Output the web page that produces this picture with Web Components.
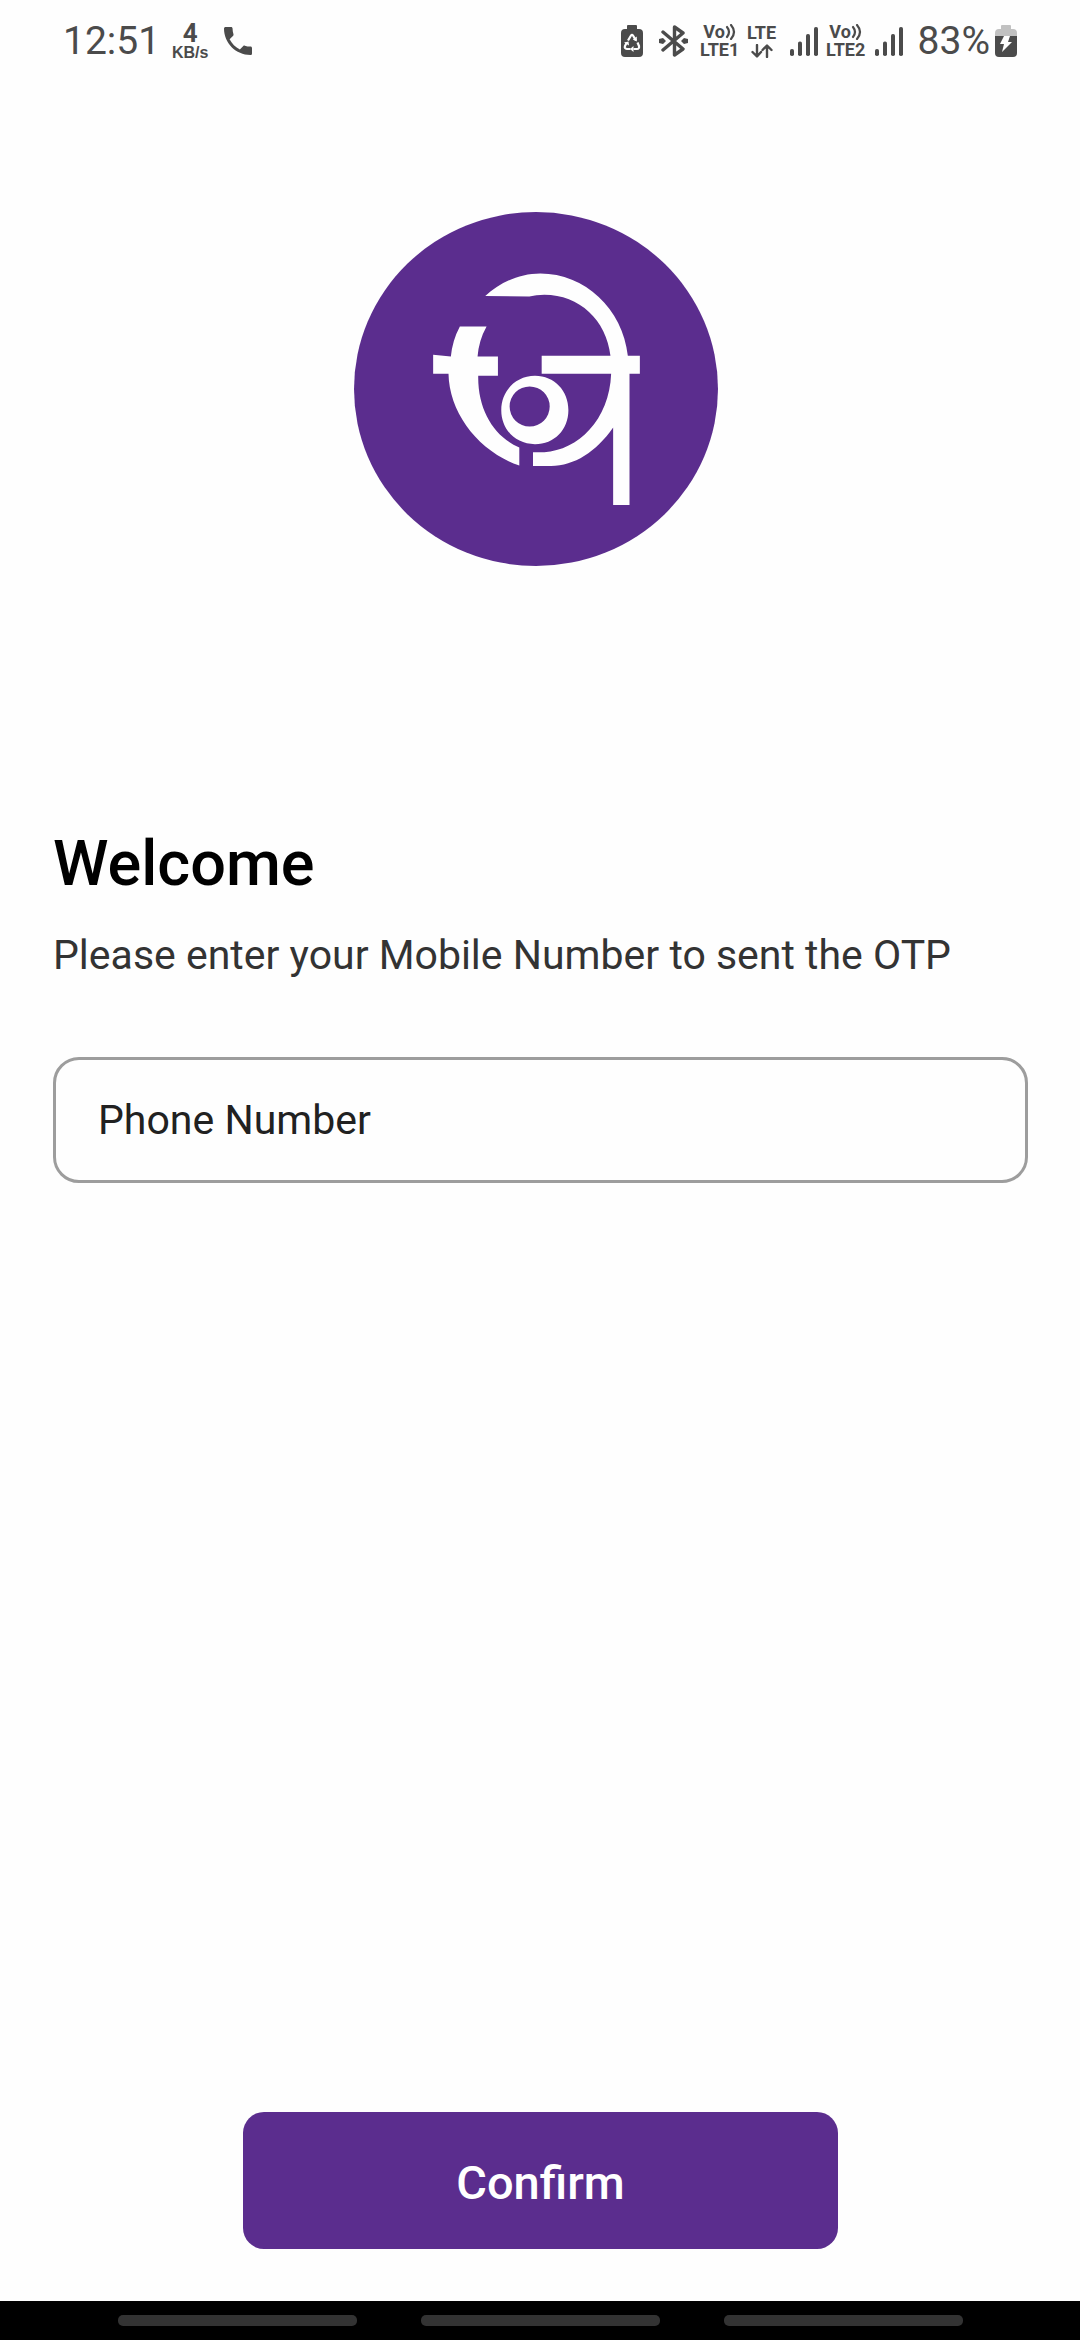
<!DOCTYPE html>
<html lang="en">
<head>
<meta charset="utf-8">
<meta name="viewport" content="width=device-width, initial-scale=1">
<title>Welcome</title>
<style>
  body { margin: 0; background: #fefefe; font-family: Roboto, "Noto Sans", sans-serif; }
</style>
</head>
<body>
<login-screen></login-screen>

<template id="status-bar">
  <style>
    :host { display: flex; align-items: center; justify-content: space-between; height: 82px; padding: 0 63px; color: #4b4b4b; box-sizing: border-box; font-size: 39px; line-height: 48px; }
    .group { display: flex; align-items: center; }
    svg { display: block; fill: currentColor; flex: none; }
  </style>
  <div class="group"><span>12:51</span><net-speed></net-speed>
    <svg width="28" height="28" viewBox="3 3 18 18" role="img" aria-label="Call"><path d="M6.6 10.8c1.4 2.8 3.8 5.1 6.6 6.6l2.2-2.2c.3-.3.7-.4 1-.2 1.1.4 2.3.6 3.6.6.6 0 1 .4 1 1V20c0 .6-.4 1-1 1C10.600 21 3 13.400 3 4c0-.6.500-1 1-1h3.500c.6 0 1 .4 1 1 0 1.200.2 2.400.6 3.600.1.300 0 .7-.2 1z"/></svg>
  </div>
  <div class="group">
    <svg width="22" height="32" viewBox="0 0 22 32"><path d="M7 0h8q1 0 1 1v3h2q4 0 4 4v20q0 4-4 4H4q-4 0-4-4V8q0-4 4-4h2V1q0-1 1-1z"/><path d="M7 15.500 10 10.500q1-1.500 2 0l3 5M16.500 17.500l1.500 3.500q.5 3-2 3h-3.500M9.500 24H6q-3-.5-2-3l1.500-3" fill="none" stroke="#fefefe" stroke-width="2.200" stroke-linejoin="round"/><path d="M15.800 11.500v5l-4-2zM12.500 21v6l-3.500-3zM3 17.500l4.500-1 .5 4z" fill="#fefefe"/></svg>
    <svg style="margin-left:16px" width="29" height="32" viewBox="0 0 29 32"><path d="M4 7 24 24l-8.500 6V2L24 8 4 25" fill="none" stroke="currentColor" stroke-width="3.400" stroke-linejoin="round" stroke-linecap="round"/><path d="m0 14 4-1 3 3-3 3-4-1zM29 14l-4-1-3 3 3 3 4-1z"/></svg>
    <volte-label style="margin-left:12px">LTE1</volte-label>
    <lte-data></lte-data>
    <signal-bars></signal-bars>
    <volte-label style="margin-left:8px">LTE2</volte-label>
    <signal-bars style="margin-left:9px"></signal-bars>
    <span style="margin-left:15px">83%</span>
    <svg style="margin-left:5px" width="22" height="32" viewBox="0 0 22 32"><path fill="#c1c1c1" d="M7 0h8q1 0 1 1v3h2q4 0 4 4v4H0V8q0-4 4-4h2V1q0-1 1-1z"/><path d="M0 11h22v17q0 4-4 4H4q-4 0-4-4z"/><path fill="#fefefe" d="m9 11h6l-2 6h4L7 27l2-8H5z"/></svg>
  </div>
</template>

<template id="net-speed">
  <style>
    :host { display: flex; flex-direction: column; align-items: center; width: 38px; margin: 0 15px 0 11px; font-weight: 700; }
    .n { font-size: 26px; line-height: 24px; }
    .u { font: 700 16px/16px "Liberation Sans", sans-serif; }
  </style>
  <span class="n">4</span><span class="u">KB/s</span>
</template>

<template id="volte-label">
  <style>
    :host { display: flex; flex-direction: column; align-items: center; width: 40px; font-weight: 700; font-size: 18px; line-height: 18px; }
    .top { display: flex; align-items: center; }
    svg { display: block; }
  </style>
  <span class="top">Vo<svg width="11" height="16" viewBox="0 0 11 16" fill="none" stroke="currentColor" stroke-width="2.200" stroke-linecap="round"><path d="M2 3q4 5 0 10M6 1q6 7 0 14"/></svg></span>
  <slot></slot>
</template>

<template id="lte-data">
  <style>
    :host { display: flex; flex-direction: column; align-items: center; width: 32px; margin: 0 12px 0 6px; font-weight: 700; font-size: 18px; line-height: 18px; }
    svg { display: block; margin-top: 2px; }
  </style>
  LTE<svg width="22" height="14" viewBox="0 0 22 14" fill="none" stroke="currentColor" stroke-width="2.400" stroke-linecap="round" stroke-linejoin="round"><path d="M6 1v11M1.500 8 6 12.500 10 8M16 13V2M11.500 6 16 1.500 20.500 6"/></svg>
</template>

<template id="signal-bars">
  <style>:host { display: block; } svg { display: block; fill: currentColor; }</style>
  <svg width="28" height="29" viewBox="0 0 28 29"><rect y="22" width="4" height="7" rx="1.800"/><rect x="8" y="14.500" width="4" height="14.500" rx="1.800"/><rect x="16" y="7" width="4" height="22" rx="1.800"/><rect x="24" width="4" height="29" rx="1.800"/></svg>
</template>

<template id="brand-logo">
  <style>:host { display: block; } svg { display: block; margin: 0 auto; }</style>
  <svg width="364" height="354" viewBox="40 36 1090 1061" preserveAspectRatio="none" role="img" aria-label="Logo">
    <ellipse cx="585" cy="566.500" rx="545" ry="530.500" fill="#5b2d8e"/>
    <g fill="#fefefe">
      <path d="M433 288C475 248 535 220 598 220C730 220 845 325 860 467H896V521H865V914H816V682C765 755 700 797 630 797H576V756H610C710 750 805 660 810 521H602V467H808C796 360 715 284 610 284Q585 284 565 289Z"/>
      <path d="M357 379H437Q414 420 410 469H471V527H412C410 630 460 710 535 742V796C415 755 325 640 323 521H277V464L330 469Q335 420 357 379Z"/>
      <path fill-rule="evenodd" d="M582 527C640 527 682 572 682 630S640 732 582 732 481 688 481 630 525 527 582 527ZM566 559A60 60 0 1 0 566 679A60 60 0 1 0 566 559Z"/>
    </g>
  </svg>
</template>

<template id="phone-field">
  <style>
    :host { display: block; }
    input { display: block; box-sizing: border-box; width: 100%; height: 126px; padding: 0 42px; border: 3px solid #9d9d9d; border-radius: 26px; background: transparent; font: 400 41px/48px Roboto, sans-serif; color: #212121; outline: none; }
    input::placeholder { color: #212121; opacity: 1; }
  </style>
  <input id="phone" type="tel" placeholder="Phone Number" aria-label="Phone Number">
</template>

<template id="confirm-button">
  <style>
    :host { display: block; width: 55%; }
    button { display: block; width: 100%; height: 137px; padding: 4px 0 0; border: 0; border-radius: 21px; background: #5b2d8e; color: #fff; font: 500 47px/56px Roboto, sans-serif; }
  </style>
  <button type="button"><slot></slot></button>
</template>

<template id="nav-bar">
  <style>
    :host { display: flex; align-items: center; justify-content: center; gap: 64px; height: 39px; background: #000; }
    i { width: 239px; height: 11px; border-radius: 5px; background: #333; }
  </style>
  <i></i><i></i><i></i>
</template>

<template id="login-screen">
  <style>
    :host { display: flex; flex-direction: column; min-height: 100vh; }
    main { flex: 1; display: flex; flex-direction: column; padding: 130px 52px 52px 53px; }
    brand-logo { padding-right: 10px; }
    h1 { margin: 260px 0 0; font-size: 63px; line-height: 76px; font-weight: 500; color: #000; }
    p { margin: 29px 0 0; font-size: 41px; line-height: 48px; color: #333; }
    phone-field { margin-top: 78px; }
    confirm-button { margin: auto auto 0; }
    confirm-button { width: 61%; }
  </style>
  <status-bar></status-bar>
  <main>
    <brand-logo></brand-logo>
    <h1>Welcome</h1>
    <p>Please enter your Mobile Number to sent the OTP</p>
    <phone-field></phone-field>
    <confirm-button>Confirm</confirm-button>
  </main>
  <nav-bar></nav-bar>
</template>

<script>
  class TemplateElement extends HTMLElement {
    constructor() {
      super();
      const template = document.getElementById(this.localName);
      this.attachShadow({ mode: "open" }).append(document.importNode(template.content, true));
    }
  }
  for (const name of ["net-speed", "volte-label", "lte-data", "signal-bars", "status-bar",
    "brand-logo", "phone-field", "confirm-button", "nav-bar", "login-screen"]) {
    customElements.define(name, class extends TemplateElement {});
  }
</script>
</body>
</html>
